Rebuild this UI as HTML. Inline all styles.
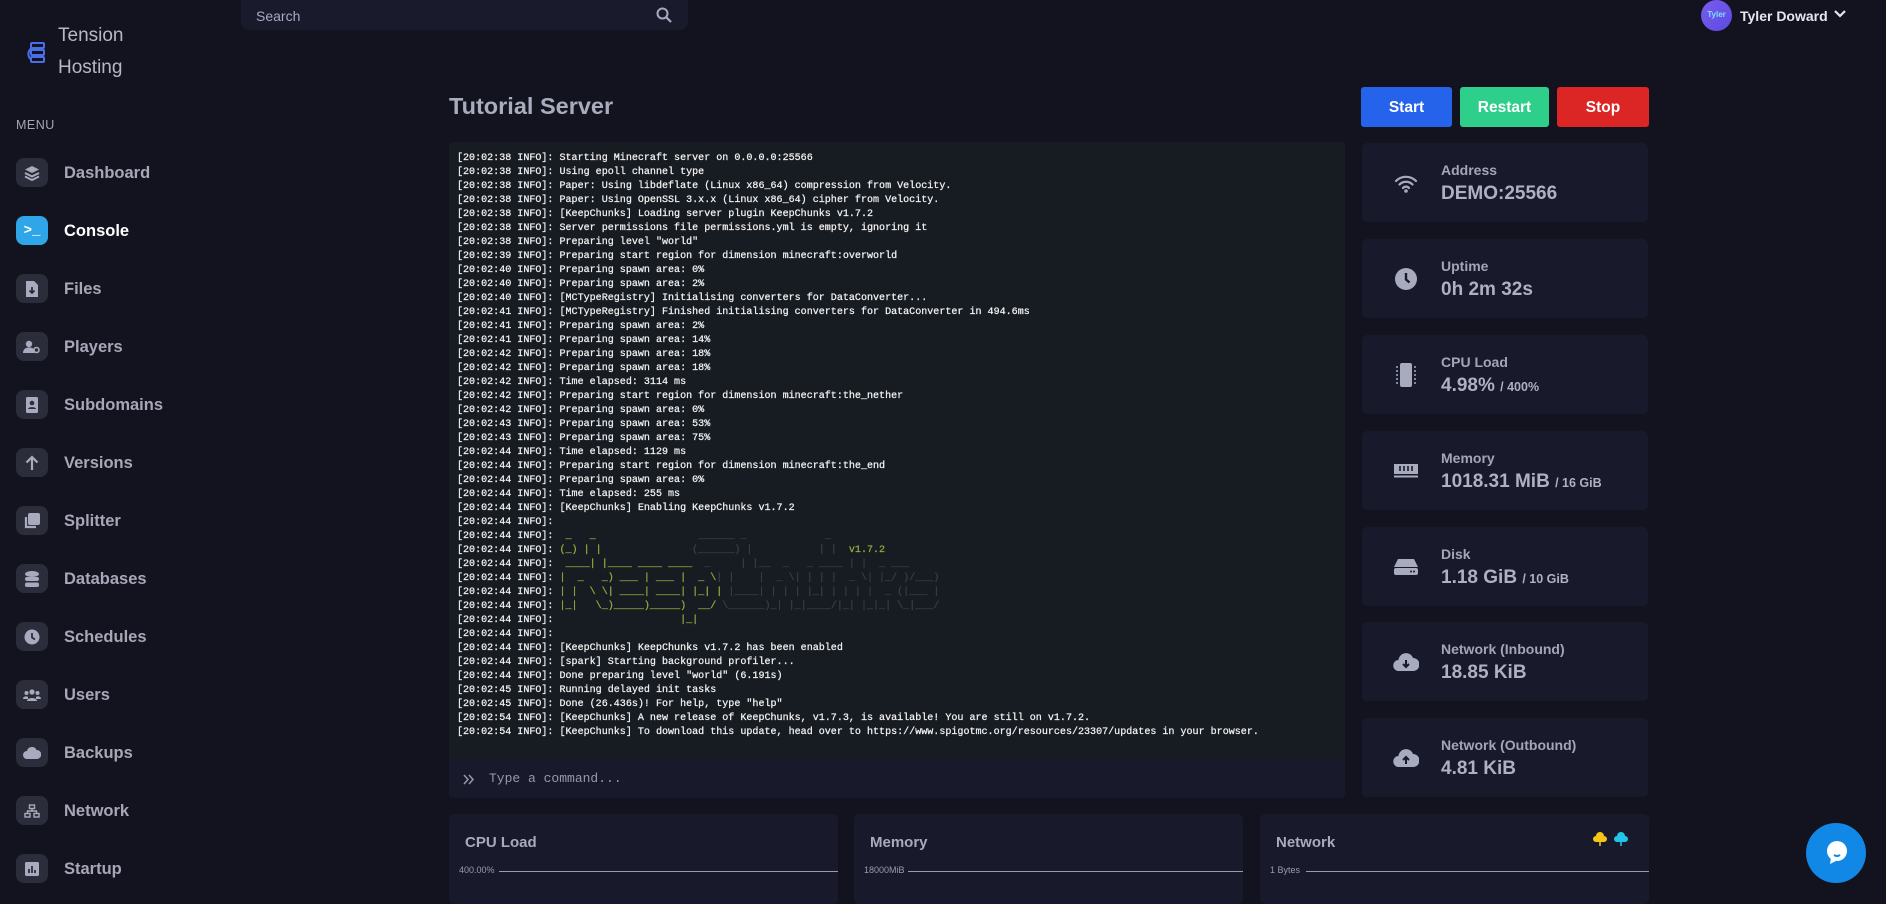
<!DOCTYPE html>
<html><head><meta charset="utf-8"><style>
*{margin:0;padding:0;box-sizing:border-box}
body{width:1886px;height:894px;overflow:hidden;background:#13131f;font-family:"Liberation Sans",sans-serif;color:#a8abbd;position:relative}
.abs{position:absolute}
.logo1{left:58px;top:20px;font-size:19px;color:#b6b8c6;line-height:32px}
.menu{left:16px;top:118px;font-size:12.5px;letter-spacing:.5px;color:#a3a5b5}
.item{position:absolute;left:16px;height:30px;width:200px}
.item .ic{position:absolute;left:0;top:0;width:32px;height:29px;border-radius:8px;background:#2c2d3a;display:flex;align-items:center;justify-content:center}
.item .tx{position:absolute;left:48px;top:6px;font-size:16.5px;font-weight:bold;color:#a6a8b8}
.search{left:241px;top:0;width:447px;height:30px;background:#191a2c;border-radius:0 0 8px 8px}
.search span{position:absolute;left:15px;top:8px;font-size:14px;color:#a8abbd}
.title{left:449px;top:93px;font-size:23.5px;font-weight:bold;color:#a9acbc}
.btn{position:absolute;top:87px;height:40px;border-radius:3px;color:#fff;font-weight:bold;font-size:15.5px;text-align:center;line-height:42px}
.console{left:449px;top:142px;width:896px;height:656px;background:#171b22;border-radius:4px;overflow:hidden}
.console pre{position:absolute;left:8px;top:10px;font-family:"Liberation Mono",monospace;font-size:10.05px;line-height:14px;color:#f2f2f2;-webkit-text-stroke:0.25px #f2f2f2}
.g{color:#8fae3c;-webkit-text-stroke:0.25px #8fae3c}.d{color:#3a3e48;-webkit-text-stroke:0.25px #3a3e48}
.inp{position:absolute;left:0;top:617px;width:896px;height:39px;background:#181a2b}
.inp span{position:absolute;left:40px;top:12px;font-family:"Liberation Mono",monospace;font-size:13px;color:#9799a8}
.card{position:absolute;left:1362px;width:286px;height:79px;background:#181a2b;border-radius:5px}
.card .ic{position:absolute;left:22px;top:18px;width:44px;height:44px;display:flex;align-items:center;justify-content:center}
.card .l{position:absolute;left:79px;top:19px;font-size:14px;font-weight:bold;color:#a3a6b6}
.card .v{position:absolute;left:79px;top:40px;font-size:19px;font-weight:bold;color:#aeb1c1}
.card .v small{font-size:12.5px}
.bc{position:absolute;top:814px;height:90px;width:389px;background:#181a2b;border-radius:5px}
.bc .t{position:absolute;left:16px;top:20px;font-size:15px;font-weight:bold;color:#a8abbd}
.bc .ax{position:absolute;left:10px;top:51px;font-size:9px;color:#9a9cab}
.bc .ln{position:absolute;top:57px;right:0;height:1px;background:#9a9cab}
</style></head><body>
<svg class="abs" style="left:24px;top:40px" width="24" height="24" viewBox="0 0 24 24"><rect x="7" y="3" width="13" height="5" rx="1" fill="none" stroke="#4a6ee8" stroke-width="2"/><rect x="7" y="10" width="13" height="5" rx="1" fill="none" stroke="#4a6ee8" stroke-width="2"/><rect x="7" y="17" width="13" height="5" rx="1" fill="none" stroke="#4a6ee8" stroke-width="2"/><path d="M8 8 Q2 12 6 19" stroke="#4a6ee8" stroke-width="2" fill="none"/></svg>
<div class="abs logo1">Tension<br>Hosting</div>
<div class="abs menu">MENU</div>

<div class="item" style="top:158px"><div class="ic"><svg width="16" height="16" viewBox="0 0 16 16"><path d="M8 1 15 4.5 8 8 1 4.5Z" fill="#a8abbd"/><path d="M1 8 8 11.5 15 8M1 11.5 8 15 15 11.5" stroke="#a8abbd" stroke-width="2" fill="none"/></svg></div><div class="tx">Dashboard</div></div>
<div class="item" style="top:216px"><div class="ic" style="background:#2ea6e8"><span style="color:#fff;font-family:'Liberation Mono';font-size:14px;font-weight:bold">&gt;_</span></div><div class="tx" style="color:#fff">Console</div></div>
<div class="item" style="top:274px"><div class="ic"><svg width="14" height="16" viewBox="0 0 14 16"><path d="M1 0h8l4 4v12H1Z" fill="#a8abbd"/><path d="M7 6v6M4.5 9.5 7 12l2.5-2.5" stroke="#2c2d3a" stroke-width="1.8" fill="none"/></svg></div><div class="tx">Files</div></div>
<div class="item" style="top:332px"><div class="ic"><svg width="18" height="14" viewBox="0 0 18 14"><circle cx="6" cy="4" r="3.2" fill="#a8abbd"/><path d="M0 13c0-4 3-5.5 6-5.5s5 1 5.5 2.5V13Z" fill="#a8abbd"/><circle cx="13.5" cy="10" r="2.5" fill="none" stroke="#a8abbd" stroke-width="1.6"/></svg></div><div class="tx">Players</div></div>
<div class="item" style="top:390px"><div class="ic"><svg width="14" height="16" viewBox="0 0 14 16"><rect x="1" y="0" width="12" height="16" rx="1.5" fill="#a8abbd"/><circle cx="7" cy="6" r="2.3" fill="#2c2d3a"/><path d="M3 12c0-2.5 8-2.5 8 0Z" fill="#2c2d3a"/></svg></div><div class="tx">Subdomains</div></div>
<div class="item" style="top:448px"><div class="ic"><svg width="14" height="16" viewBox="0 0 14 16"><path d="M7 15V2M1.5 7.5 7 2l5.5 5.5" stroke="#a8abbd" stroke-width="2.2" fill="none"/></svg></div><div class="tx">Versions</div></div>
<div class="item" style="top:506px"><div class="ic"><svg width="16" height="16" viewBox="0 0 16 16"><rect x="4" y="0" width="12" height="12" rx="2" fill="#a8abbd"/><path d="M2 4v10h10" stroke="#a8abbd" stroke-width="2.2" fill="none"/></svg></div><div class="tx">Splitter</div></div>
<div class="item" style="top:564px"><div class="ic"><svg width="14" height="16" viewBox="0 0 14 16"><ellipse cx="7" cy="3" rx="7" ry="3" fill="#a8abbd"/><rect x="0" y="6" width="14" height="4" rx="2" fill="#a8abbd"/><rect x="0" y="11.5" width="14" height="4.5" rx="2" fill="#a8abbd"/></svg></div><div class="tx">Databases</div></div>
<div class="item" style="top:622px"><div class="ic"><svg width="16" height="16" viewBox="0 0 16 16"><circle cx="8" cy="8" r="7.5" fill="#a8abbd"/><path d="M8 4v4.5l3 2" stroke="#2c2d3a" stroke-width="1.8" fill="none"/></svg></div><div class="tx">Schedules</div></div>
<div class="item" style="top:680px"><div class="ic"><svg width="18" height="12" viewBox="0 0 18 12"><circle cx="9" cy="3" r="2.6" fill="#a8abbd"/><circle cx="3.5" cy="4" r="2" fill="#a8abbd"/><circle cx="14.5" cy="4" r="2" fill="#a8abbd"/><path d="M4 12c0-4 10-4 10 0ZM0 10c0-3 4-3 5-2v2ZM18 10c0-3-4-3-5-2v2Z" fill="#a8abbd"/></svg></div><div class="tx">Users</div></div>
<div class="item" style="top:738px"><div class="ic"><svg width="18" height="12" viewBox="0 0 18 12"><path d="M4 12a4 4 0 0 1 0-8 5 5 0 0 1 9.5-1A4.5 4.5 0 0 1 14 12Z" fill="#a8abbd"/></svg></div><div class="tx">Backups</div></div>
<div class="item" style="top:796px"><div class="ic"><svg width="16" height="14" viewBox="0 0 16 14"><g stroke="#a8abbd" stroke-width="1.4" fill="none"><rect x="5.5" y="1" width="5" height="3.5"/><rect x="1" y="9.5" width="5" height="3.5"/><rect x="10" y="9.5" width="5" height="3.5"/><path d="M8 4.5v2.5M3.5 9.5V7h9v2.5"/></g></svg></div><div class="tx">Network</div></div>
<div class="item" style="top:854px"><div class="ic"><svg width="14" height="14" viewBox="0 0 14 14"><rect width="14" height="14" rx="1.5" fill="#a8abbd"/><path d="M4 11V7M7 11V4M10 11V8" stroke="#2c2d3a" stroke-width="1.8"/></svg></div><div class="tx">Startup</div></div>

<div class="abs search"><span>Search</span><svg class="abs" style="left:415px;top:7px" width="16" height="16" viewBox="0 0 16 16"><circle cx="6.5" cy="6.5" r="5" stroke="#a8abbd" stroke-width="2" fill="none"/><path d="M10.5 10.5 15 15" stroke="#a8abbd" stroke-width="2.2"/></svg></div>

<div class="abs" style="left:1701px;top:0;width:31px;height:31px;border-radius:50%;background:linear-gradient(135deg,#7c5cf0,#5a4ae0);color:#7ee0ff;font-size:8px;font-weight:bold;text-align:center;line-height:29px">Tyler</div>
<div class="abs" style="left:1740px;top:8px;font-size:14px;font-weight:bold;color:#e6e7ee">Tyler Doward</div>
<svg class="abs" style="left:1833px;top:9px" width="14" height="10" viewBox="0 0 14 10"><path d="M2 2l5 5 5-5" stroke="#e6e7ee" stroke-width="2.2" fill="none"/></svg>

<div class="abs title">Tutorial Server</div>
<div class="btn" style="left:1361px;width:91px;background:#2563eb">Start</div>
<div class="btn" style="left:1460px;width:89px;background:#2ecf8b">Restart</div>
<div class="btn" style="left:1557px;width:92px;background:#dc2626">Stop</div>

<div class="abs console"><pre>[20:02:38 INFO]: Starting Minecraft server on 0.0.0.0:25566
[20:02:38 INFO]: Using epoll channel type
[20:02:38 INFO]: Paper: Using libdeflate (Linux x86_64) compression from Velocity.
[20:02:38 INFO]: Paper: Using OpenSSL 3.x.x (Linux x86_64) cipher from Velocity.
[20:02:38 INFO]: [KeepChunks] Loading server plugin KeepChunks v1.7.2
[20:02:38 INFO]: Server permissions file permissions.yml is empty, ignoring it
[20:02:38 INFO]: Preparing level "world"
[20:02:39 INFO]: Preparing start region for dimension minecraft:overworld
[20:02:40 INFO]: Preparing spawn area: 0%
[20:02:40 INFO]: Preparing spawn area: 2%
[20:02:40 INFO]: [MCTypeRegistry] Initialising converters for DataConverter...
[20:02:41 INFO]: [MCTypeRegistry] Finished initialising converters for DataConverter in 494.6ms
[20:02:41 INFO]: Preparing spawn area: 2%
[20:02:41 INFO]: Preparing spawn area: 14%
[20:02:42 INFO]: Preparing spawn area: 18%
[20:02:42 INFO]: Preparing spawn area: 18%
[20:02:42 INFO]: Time elapsed: 3114 ms
[20:02:42 INFO]: Preparing start region for dimension minecraft:the_nether
[20:02:42 INFO]: Preparing spawn area: 0%
[20:02:43 INFO]: Preparing spawn area: 53%
[20:02:43 INFO]: Preparing spawn area: 75%
[20:02:44 INFO]: Time elapsed: 1129 ms
[20:02:44 INFO]: Preparing start region for dimension minecraft:the_end
[20:02:44 INFO]: Preparing spawn area: 0%
[20:02:44 INFO]: Time elapsed: 255 ms
[20:02:44 INFO]: [KeepChunks] Enabling KeepChunks v1.7.2
[20:02:44 INFO]:
[20:02:44 INFO]: <span class="g"> _   _                </span><span class="d"> ______ _             _</span>
[20:02:44 INFO]: <span class="g">(_) | |               </span><span class="d">(______) |           | |</span><span class="g">  v1.7.2</span>
[20:02:44 INFO]: <span class="g"> ____| |____ ____ ____ </span><span class="d"> _     | |__  _   _ ____ | |  _ ___</span>
[20:02:44 INFO]: <span class="g">|  _   _) ___ | ___ |  _ \</span><span class="d">| |    |  _ \| | | |  _ \| |_/ )/___)</span>
[20:02:44 INFO]: <span class="g">| |  \ \| ____| ____| |_| |</span><span class="d"> |____| | | | |_| | | | |  _ (|___ |</span>
[20:02:44 INFO]: <span class="g">|_|   \_)_____)_____)  __/</span><span class="d"> \______)_| |_|____/|_| |_|_| \_|___/</span>
[20:02:44 INFO]: <span class="g">                    |_|</span>
[20:02:44 INFO]:
[20:02:44 INFO]: [KeepChunks] KeepChunks v1.7.2 has been enabled
[20:02:44 INFO]: [spark] Starting background profiler...
[20:02:44 INFO]: Done preparing level "world" (6.191s)
[20:02:45 INFO]: Running delayed init tasks
[20:02:45 INFO]: Done (26.436s)! For help, type "help"
[20:02:54 INFO]: [KeepChunks] A new release of KeepChunks, v1.7.3, is available! You are still on v1.7.2.
[20:02:54 INFO]: [KeepChunks] To download this update, head over to https://www.spigotmc.org/resources/23307/updates in your browser.</pre>
<div class="inp"><svg class="abs" style="left:14px;top:15px" width="12" height="11" viewBox="0 0 12 11"><path d="M1 1l4 4.5L1 10M6 1l4 4.5L6 10" stroke="#9799a8" stroke-width="1.5" fill="none"/></svg><span>Type a command...</span></div>
</div>

<div class="card" style="top:143px"><div class="ic"><svg width="24" height="20" viewBox="0 0 24 20"><path d="M2 8a14 14 0 0 1 20 0M5.5 11.5a9 9 0 0 1 13 0M9 15a4 4 0 0 1 6 0" stroke="#a8abbd" stroke-width="2.2" fill="none" stroke-linecap="round"/><circle cx="12" cy="18" r="1.8" fill="#a8abbd"/></svg></div><div class="l">Address</div><div class="v">DEMO:25566</div></div>
<div class="card" style="top:239px"><div class="ic"><svg width="24" height="24" viewBox="0 0 24 24"><circle cx="12" cy="12" r="11" fill="#a8abbd"/><path d="M12 6v6.5l3.5 3" stroke="#181a2b" stroke-width="2.4" fill="none"/></svg></div><div class="l">Uptime</div><div class="v">0h 2m 32s</div></div>
<div class="card" style="top:335px"><div class="ic"><svg width="24" height="26" viewBox="0 0 24 26"><rect x="6" y="1" width="12" height="24" rx="2" fill="#a8abbd"/><path d="M2 5h2M2 9h2M2 13h2M2 17h2M2 21h2M20 5h2M20 9h2M20 13h2M20 17h2M20 21h2" stroke="#a8abbd" stroke-width="1.5"/></svg></div><div class="l">CPU Load</div><div class="v">4.98% <small>/ 400%</small></div></div>
<div class="card" style="top:431px"><div class="ic"><svg width="26" height="16" viewBox="0 0 26 16"><rect x="1" y="1" width="24" height="10" fill="#a8abbd"/><path d="M7 3v5M11 3v5M15 3v5M19 3v5" stroke="#181a2b" stroke-width="1.6"/><rect x="1" y="12.5" width="24" height="2" fill="#a8abbd"/></svg></div><div class="l">Memory</div><div class="v">1018.31 MiB <small>/ 16 GiB</small></div></div>
<div class="card" style="top:527px"><div class="ic"><svg width="26" height="18" viewBox="0 0 26 18"><path d="M5 1h16l4 8H1Z" fill="#a8abbd"/><rect x="1" y="10" width="24" height="7" rx="2" fill="#a8abbd"/><circle cx="18" cy="13.5" r="1" fill="#181a2b"/><circle cx="21" cy="13.5" r="1" fill="#181a2b"/></svg></div><div class="l">Disk</div><div class="v">1.18 GiB <small>/ 10 GiB</small></div></div>
<div class="card" style="top:622px"><div class="ic"><svg width="26" height="20" viewBox="0 0 26 20"><path d="M6 19a5.5 5.5 0 0 1-.5-11A7.5 7.5 0 0 1 20 6a6.5 6.5 0 0 1 0 13Z" fill="#a8abbd"/><path d="M13 8v7M10 12l3 3 3-3" stroke="#181a2b" stroke-width="2" fill="none"/></svg></div><div class="l">Network (Inbound)</div><div class="v">18.85 KiB</div></div>
<div class="card" style="top:718px"><div class="ic"><svg width="26" height="20" viewBox="0 0 26 20"><path d="M6 19a5.5 5.5 0 0 1-.5-11A7.5 7.5 0 0 1 20 6a6.5 6.5 0 0 1 0 13Z" fill="#a8abbd"/><path d="M13 16V9M10 12l3-3 3 3" stroke="#181a2b" stroke-width="2" fill="none"/></svg></div><div class="l">Network (Outbound)</div><div class="v">4.81 KiB</div></div>

<div class="bc" style="left:449px"><div class="t">CPU Load</div><div class="ax">400.00%</div><div class="ln" style="left:50px"></div></div>
<div class="bc" style="left:854px"><div class="t">Memory</div><div class="ax">18000MiB</div><div class="ln" style="left:54px"></div></div>
<div class="bc" style="left:1260px"><div class="t">Network</div><div class="ax">1 Bytes</div><div class="ln" style="left:46px"></div>
<svg class="abs" style="left:333px;top:18px" width="14" height="14" viewBox="0 0 14 14"><path d="M3 10a3 3 0 0 1 0-6 4 4 0 0 1 8 0 3 3 0 0 1 0 6Z" fill="#f5c518"/><path d="M7 6v8" stroke="#f5c518" stroke-width="1.5"/></svg>
<svg class="abs" style="left:354px;top:18px" width="14" height="14" viewBox="0 0 14 14"><path d="M3 10a3 3 0 0 1 0-6 4 4 0 0 1 8 0 3 3 0 0 1 0 6Z" fill="#22c5e8"/><path d="M7 6v8" stroke="#22c5e8" stroke-width="1.5"/></svg></div>

<div class="abs" style="left:1806px;top:823px;width:60px;height:60px;border-radius:50%;background:#1187e6"></div>
<svg class="abs" style="left:1822px;top:838px" width="30" height="30" viewBox="0 0 30 30"><circle cx="15" cy="13" r="10" fill="#fff"/><path d="M9 20l-1 6 6-3Z" fill="#fff"/><path d="M12 17q3 2 6 0" stroke="#1187e6" stroke-width="2" fill="none"/></svg>
</body></html>
